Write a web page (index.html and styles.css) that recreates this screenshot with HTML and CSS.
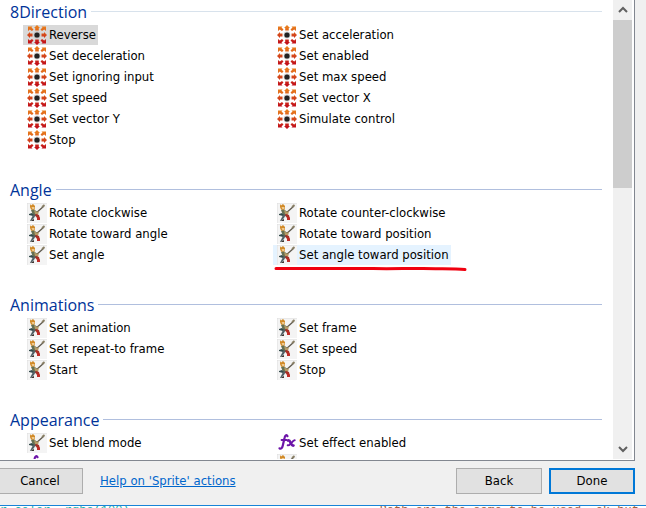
FILE: index.html
```html
<!DOCTYPE html>
<html lang="en">
<head>
<meta charset="utf-8">
<title>Add action</title>
<link rel="stylesheet" href="styles.css">
</head>
<body>
<svg class="defs" aria-hidden="true">
  <defs>
    <linearGradient id="heat" x1="0" y1="0" x2="0" y2="20" gradientUnits="userSpaceOnUse">
      <stop offset="0.1" stop-color="#e87c1c"/>
      <stop offset="0.5" stop-color="#d4461a"/>
      <stop offset="0.9" stop-color="#c2101a"/>
    </linearGradient>
    <symbol id="dir" viewBox="0 0 20 20">
      <g fill="url(#heat)">
        <path d="M10 0l3 3h-1.200v2.500h-3.600v-2.500H7z"/>
        <path d="M10 20l3-3h-1.200v-2.500h-3.600v2.500H7z"/>
        <path d="M0 10l3-3v1.400h2.500v3.200h-2.500v1.400z"/>
        <path d="M20 10l-3-3v1.400h-2.500v3.200h2.500v1.400z"/>
        <path d="M1 1.500h4.500L4.500 2.600 6.500 4.600 5 6 2.800 4.400 1 6z"/>
        <path d="M19 1.500h-4.500l1 1.100-2 2L15 6l2.200-1.600L19 6z"/>
        <path d="M1 18.500h4.500l-1-1.100 2-2L5 14l-2.200 1.600L1 14z"/>
        <path d="M19 18.500h-4.500l1-1.100-2-2L15 14l2.200 1.600L19 14z"/>
      </g>
      <circle cx="10" cy="10" r="3.400" fill="#aaa" opacity=".6"/>
      <circle cx="10" cy="10" r="2.600" fill="#222"/>
    </symbol>
    <symbol id="sprite" viewBox="0 0 20 20">
      <path d="M0 0h20v20H0z" fill="#f4f4f4"/>
      <path d="M0 20V0h20" fill="none" stroke="#ddd"/>
      <path d="M8 11l9-8" stroke="#5e584c" stroke-width="1.300"/>
      <path d="M15 4l2.500-2" stroke="#8a8066" stroke-width="1.800"/>
      <path d="M3 1l1 1.500L6 1l2 2v3L6.500 7.500 4 6.500 3 4z" fill="#d18a27"/>
      <path d="M4.500 4h3v2.500h-2z" fill="#efc88e"/>
      <path d="M4 7l3-.5 3 2 1 3-3 2-2-1-1-3z" fill="#657052"/>
      <path d="M7 7l3 2 2-1-1 4-3-1z" fill="#b69a65"/>
      <path d="M2 11l3-1 2 2-1 1-4-1z" fill="#334b4c"/>
      <path d="M6 12l3-1-2 4-3 3H3l2-4z" fill="#516066"/>
      <path d="M9 11l3 1 1 4-3-1-2-3z" fill="#a92d24"/>
      <path d="M10 14l3 .5V17h-3z" fill="#c02c28"/>
      <path d="M5 17l2-1v2H4z" fill="#3d3633"/>
    </symbol>
    <symbol id="fx" viewBox="0 0 20 20">
      <g fill="none" stroke="#6c14a8" stroke-linecap="round">
        <path d="M10.500 3.200C9.500 1.200 8 2.500 7.500 5L5.800 12.500C5.300 15 4 16.500 2.500 15.300" stroke-width="2.200"/>
        <path d="M4.500 7h5" stroke-width="1.800"/>
        <path d="M11 7.500c3-1 2.500 6 5.500 5" stroke-width="2.600"/>
        <path d="M17.700 7.300c-2-.5-4.500 6-7 5" stroke-width="2"/>
      </g>
    </symbol>
  </defs>
</svg>

<main class="panel">
  <div class="groups">
    <section class="group">
      <h2 class="pale">8Direction</h2>
      <div class="items">
        <button class="item selected"><svg><use href="#dir"/></svg>Reverse</button>
        <button class="item"><svg><use href="#dir"/></svg>Set acceleration</button>
        <button class="item"><svg><use href="#dir"/></svg>Set deceleration</button>
        <button class="item"><svg><use href="#dir"/></svg>Set enabled</button>
        <button class="item"><svg><use href="#dir"/></svg>Set ignoring input</button>
        <button class="item"><svg><use href="#dir"/></svg>Set max speed</button>
        <button class="item"><svg><use href="#dir"/></svg>Set speed</button>
        <button class="item"><svg><use href="#dir"/></svg>Set vector X</button>
        <button class="item"><svg><use href="#dir"/></svg>Set vector Y</button>
        <button class="item"><svg><use href="#dir"/></svg>Simulate control</button>
        <button class="item"><svg><use href="#dir"/></svg>Stop</button>
      </div>
    </section>
    <section class="group">
      <h2>Angle</h2>
      <div class="items">
        <button class="item"><svg><use href="#sprite"/></svg>Rotate clockwise</button>
        <button class="item"><svg><use href="#sprite"/></svg>Rotate counter-clockwise</button>
        <button class="item"><svg><use href="#sprite"/></svg>Rotate toward angle</button>
        <button class="item"><svg><use href="#sprite"/></svg>Rotate toward position</button>
        <button class="item"><svg><use href="#sprite"/></svg>Set angle</button>
        <button class="item hovered"><svg><use href="#sprite"/></svg>Set angle toward position<svg class="marker" viewBox="0 0 194 8"><path d="M3 4.500H100C125 5 135 4 150 4.500S180 4 192 5.500" fill="none" stroke="#f00010" stroke-width="3" stroke-linecap="round"/></svg></button>
      </div>
    </section>
    <section class="group">
      <h2>Animations</h2>
      <div class="items">
        <button class="item"><svg><use href="#sprite"/></svg>Set animation</button>
        <button class="item"><svg><use href="#sprite"/></svg>Set frame</button>
        <button class="item"><svg><use href="#sprite"/></svg>Set repeat-to frame</button>
        <button class="item"><svg><use href="#sprite"/></svg>Set speed</button>
        <button class="item"><svg><use href="#sprite"/></svg>Start</button>
        <button class="item"><svg><use href="#sprite"/></svg>Stop</button>
      </div>
    </section>
    <section class="group">
      <h2>Appearance</h2>
      <div class="items">
        <button class="item"><svg><use href="#sprite"/></svg>Set blend mode</button>
        <button class="item"><svg><use href="#fx"/></svg>Set effect enabled</button>
        <button class="item" aria-label="Effect"><svg><use href="#fx"/></svg></button>
        <button class="item" aria-label="Sprite"><svg><use href="#sprite"/></svg></button>
      </div>
    </section>
  </div>
  <div class="scrollbar">
    <button class="arrow" aria-label="Scroll up"><svg viewBox="0 0 10 8"><path d="M1 6l4-4 4 4"/></svg></button>
    <div class="thumb"></div>
    <div class="track"></div>
    <button class="arrow" aria-label="Scroll down"><svg viewBox="0 0 10 8"><path d="M1 2l4 4 4-4"/></svg></button>
  </div>
</main>
<footer class="bar">
  <button class="push cancel">Cancel</button>
  <a href="#help">Help on 'Sprite' actions</a>
  <button class="push back">Back</button>
  <button class="push done">Done</button>
</footer>
<div class="behind"><span>r color, rgba(100)</span><span class="brown">Both are the same to be used, ok but</span></div>
</body>
</html>
```

FILE: styles.css
```css
* {
  box-sizing: border-box;
}

body {
  margin: 0;
  height: 100vh;
  display: flex;
  flex-direction: column;
  overflow: hidden;
  background: #f0f0f0;
  color: #000;
  font: 13px/20px "DejaVu Sans Condensed", "Noto Sans", sans-serif;
}

button {
  font: inherit;
  color: inherit;
  cursor: default;
}

.defs {
  position: absolute;
  width: 0;
  height: 0;
}

.panel {
  flex: 1;
  min-height: 0;
  display: flex;
  margin-right: 11px;
  padding: 0 2px 1px 0;
  border: solid #828790;
  border-width: 0 1px 1px 0;
  background: #fff;
}

.groups {
  flex: 1;
  overflow: hidden;
  padding: 0 11px 0 10px;
}

.group {
  margin-bottom: 28px;
}

h2 {
  display: flex;
  align-items: center;
  gap: 4px;
  height: 25px;
  margin: 0;
  padding-bottom: 2px;
  color: #003399;
  font: 16px/22px "Open Sans", "Noto Sans", sans-serif;
}

h2::after {
  content: "";
  flex: 1;
  height: 1px;
  background: #b0bfde;
}

h2.pale::after {
  background: #d8e2ec;
}

.items {
  display: grid;
  grid-template-columns: 250px 1fr;
  justify-items: start;
  row-gap: 1px;
  padding-left: 13px;
}

.item {
  position: relative;
  display: flex;
  align-items: center;
  gap: 2px;
  height: 20px;
  padding: 0 2px 0 4px;
  border: 0;
  background: none;
  white-space: nowrap;
}

.item svg {
  width: 20px;
  height: 20px;
}

.item.selected {
  background: #d9d9d9;
}

.item.hovered {
  background: #e5f3ff;
}

.item .marker {
  position: absolute;
  left: 0;
  top: 19px;
  width: 194px;
  height: 8px;
}

.scrollbar {
  width: 19px;
  display: flex;
  flex-direction: column;
  background: #f0f0f0;
}

.arrow {
  display: grid;
  place-items: center;
  height: 20px;
  padding: 0;
  border: 0;
  background: none;
}

.arrow svg {
  width: 10px;
  height: 8px;
  fill: none;
  stroke: #606060;
  stroke-width: 2;
}

.thumb {
  flex: 2;
  background: #cdcdcd;
}

.track {
  flex: 3;
}

.bar {
  display: flex;
  align-items: center;
  height: 45px;
  padding: 0 11px 4px 0;
  border-bottom: 1px solid #1883d7;
}

.push {
  width: 86px;
  height: 26px;
  padding: 0;
  border: 1px solid #adadad;
  background: #e1e1e1;
}

.push.cancel {
  margin-left: -3px;
}

.push.back {
  margin: 0 7px 0 auto;
}

.push.done {
  border: 2px solid #0078d7;
}

.bar a {
  margin-left: 17px;
  color: #0066cc;
}

.behind {
  display: flex;
  gap: 250px;
  height: 2px;
  overflow: hidden;
  background: #fff;
  color: #20b2aa;
  font: 12px/10px "Liberation Mono", monospace;
  white-space: nowrap;
}

.behind .brown {
  color: #a0603c;
}
```
